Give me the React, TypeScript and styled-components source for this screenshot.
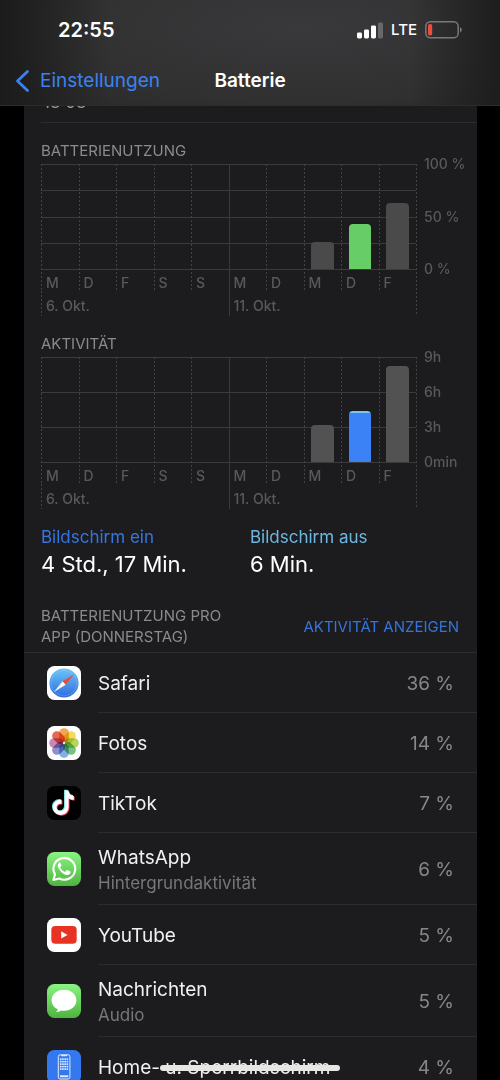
import React from "react";
import styled, { createGlobalStyle, css } from "styled-components";

const GlobalStyle = createGlobalStyle`
  *, *::before, *::after { box-sizing: border-box; }
  html, body { margin: 0; background: #000; }
  body { font-family: Inter, "Liberation Sans", sans-serif; color: #fff; -webkit-font-smoothing: antialiased; }
  h1, h2, ul, dl, dd, dt, p { margin: 0; padding: 0; font-weight: 400; }
`;

const Screen = styled.div`
  position: relative;
  display: flex;
  flex-direction: column;
  height: 100vh;
  overflow: hidden;
  background: #000;
`;

const Header = styled.header`
  flex: none;
  border-bottom: 1px solid #2c2c2d;
  background:
    linear-gradient(90deg, rgba(27, 27, 28, 1) 0%, rgba(27, 27, 28, 0) 22%, rgba(27, 27, 28, 0) 82%, rgba(27, 27, 28, 0.9) 100%),
    radial-gradient(ellipse 90% 120% at 60% 25%, #39393b 0%, #303031 60%, #262627 100%);
`;

const StatusBar = styled.div`
  display: flex;
  align-items: center;
  justify-content: space-between;
  height: 60px;
  padding: 0 38px 0 58px;
`;

const Clock = styled.time`
  font-size: 20px;
  line-height: 24px;
  font-weight: 600;
`;

const StatusIcons = styled.div`
  display: flex;
  align-items: center;
  gap: 8px;
  font-size: 15px;
  line-height: 20px;
  font-weight: 500;
`;

const NavBar = styled.nav`
  display: grid;
  grid-template-columns: 1fr auto 1fr;
  align-items: center;
  height: 45px;
  padding: 0 15px 4px;
`;

const BackLink = styled.a`
  display: flex;
  align-items: center;
  gap: 10px;
  color: #3b82f0;
  font-size: 19px;
  line-height: 24px;
  text-decoration: none;
`;

const PageTitle = styled.h1`
  font-size: 19px;
  line-height: 24px;
  font-weight: 600;
`;

const Content = styled.main`
  flex: 1;
  min-height: 0;
  overflow-y: auto;
  scrollbar-width: none;
  margin: 0 23px 0 24px;
  background: #1c1c1e;
`;

const ClippedRow = styled.p`
  display: flex;
  align-items: flex-end;
  height: 17px;
  margin-left: 17px;
  padding: 0 0 10px 2px;
  overflow: hidden;
  border-bottom: 1px solid #2b2b2d;
  color: #98989e;
  font-size: 17px;
  line-height: 20px;
`;

const ChartSection = styled.section`
  padding: 17px 0 0 17px;
`;

const Caption = styled.h2`
  color: #8a8a8f;
  font-size: 15px;
  line-height: 21px;
`;

const ChartBody = styled.div`
  display: flex;
  padding-top: 3px;
`;

const Plot = styled.div`
  position: relative;
  flex: 1;
`;

const GridLines = styled.div`
  position: absolute;
  inset: 0 0 auto 0;
  height: 106px;
  display: flex;
  flex-direction: column;
  justify-content: space-between;
`;

const GridLine = styled.div`
  height: 1px;
  background: #3b3b3d;
`;

const Columns = styled.div`
  position: relative;
  display: grid;
  grid-template-columns: repeat(10, 1fr);
`;

const dashed = "repeating-linear-gradient(#434345 0 2px, transparent 2px 4px)";

const rule = css<{ $solid?: boolean }>`
  background: ${(p) => (p.$solid ? "linear-gradient(#39393b, #39393b)" : dashed)} left top / 1px 100% no-repeat;
`;

const Day = styled.div<{ $solid?: boolean }>`
  ${rule}
  height: 127px;
`;

const BarArea = styled.div`
  display: flex;
  align-items: flex-end;
  height: 105px;
  padding: 0 20%;
`;

const Bar = styled.div<{ $color: string; $cap?: string }>`
  width: 100%;
  border-radius: 4px 4px 0 0;
  background: ${(p) => (p.$cap ? `linear-gradient(${p.$cap} 0 2px, ${p.$color} 2px)` : p.$color)};
`;

const ChartLabel = styled.span`
  display: block;
  padding: 4px 0 0 5px;
  color: #59595b;
  font-size: 14px;
  line-height: 20px;
  font-weight: 500;
`;

const Weeks = styled.div`
  display: grid;
  grid-template-columns: 1fr 1fr;
`;

const Week = styled.div<{ $solid?: boolean }>`
  ${rule}
  height: 25px;
  padding-top: 1px;
`;

const EndRule = styled.div`
  ${rule}
  width: 1px;
`;

const Axis = styled.div`
  display: flex;
  flex-direction: column;
  justify-content: space-between;
  width: 60px;
  height: 125px;
  margin-top: -10px;
  padding-left: 7px;
  color: #59595b;
  font-size: 14px;
  line-height: 20px;
  font-weight: 500;
`;

const Totals = styled.dl`
  display: grid;
  grid-template-columns: 209px 1fr;
  padding: 16px 17px 0;
`;

const TotalName = styled.dt<{ $color: string }>`
  color: ${(p) => p.$color};
  font-size: 17px;
  line-height: 24px;
`;

const TotalValue = styled.dd`
  font-size: 22px;
  line-height: 30px;
`;

const ListHeader = styled.div`
  display: flex;
  align-items: center;
  justify-content: space-between;
  padding: 26px 18px 5px 17px;
  border-bottom: 1px solid #2c2c2e;
`;

const TextButton = styled.button`
  padding: 0;
  border: 0;
  background: none;
  color: #3673dc;
  font: inherit;
  font-size: 15px;
  line-height: 21px;
`;

const AppList = styled.ul`
  list-style: none;
`;

const AppRow = styled.li<{ $tall?: boolean }>`
  display: flex;
  align-items: center;
  gap: 17px;
  height: ${(p) => (p.$tall ? 72 : 60)}px;
  padding-left: 23px;

  svg { flex: none; }
`;

const AppCell = styled.div`
  display: flex;
  flex: 1;
  align-items: center;
  justify-content: space-between;
  height: 100%;
  padding: 3px 23px 0 0;
  border-bottom: 1px solid #2c2c2e;
`;

const AppName = styled.div`
  font-size: 19px;
  line-height: 26px;
  color: #f0f0f0;
`;

const AppNote = styled.div`
  font-size: 17px;
  line-height: 24px;
  color: #77777b;
`;

const Percent = styled.span`
  color: #87878b;
  font-size: 19px;
  line-height: 26px;
`;

const HomeIndicator = styled.div`
  position: absolute;
  bottom: 9px;
  left: 50%;
  width: 36%;
  height: 6px;
  border-radius: 3px;
  background: #e8e6e4;
  transform: translateX(-50%);
`;

const Signal = () => (
  <svg width="26" height="17" viewBox="0 0 26 17" aria-label="Signal">
    <rect x="0" y="10.5" width="5" height="6" rx="1.4" fill="#fff" />
    <rect x="7" y="7.5" width="5" height="9" rx="1.4" fill="#fff" />
    <rect x="14" y="3.5" width="5" height="13" rx="1.4" fill="#fff" />
    <rect x="21" y="0.5" width="5" height="16" rx="1.4" fill="#68686a" />
  </svg>
);

const Battery = () => (
  <svg width="37" height="18" viewBox="0 0 37 18" aria-label="Batterie">
    <rect x="0.8" y="0.8" width="32.4" height="16" rx="4.6" fill="none" stroke="#79797b" strokeWidth="1.5" />
    <rect x="3" y="3" width="4.2" height="11.6" rx="1.8" fill="#ea4e3d" />
    <path d="M35 6.2c1.300.6 1.800 1.500 1.800 2.600s-.5 2-1.800 2.600z" fill="#79797b" />
  </svg>
);

const Chevron = () => (
  <svg width="15" height="24" viewBox="0 0 15 24" fill="none" aria-hidden="true">
    <path d="M12.500 2.500 2.500 12l10 9.500" stroke="#3b82f0" strokeWidth="2.800" strokeLinecap="round" strokeLinejoin="round" />
  </svg>
);

const Tile = ({ fill, children }: { fill: string; children: React.ReactNode }) => (
  <svg width="34" height="34" viewBox="0 0 34 34" aria-hidden="true">
    <defs>
      <linearGradient id="green" x1="0" y1="0" x2="0" y2="1">
        <stop offset="0" stopColor="#8af583" />
        <stop offset="1" stopColor="#4fb33e" />
      </linearGradient>
      <linearGradient id="sky" x1="0" y1="0" x2="0" y2="1">
        <stop offset="0" stopColor="#6cc6f7" />
        <stop offset="1" stopColor="#2f6be0" />
      </linearGradient>
    </defs>
    <rect width="34" height="34" rx="7.500" fill={fill} />
    {children}
  </svg>
);

const SafariIcon = () => (
  <Tile fill="#fff">
    <circle cx="17" cy="17" r="14.600" fill="url(#sky)" />
    <circle cx="17" cy="17" r="12.700" fill="none" stroke="#a8dcff" strokeOpacity=".55" strokeWidth="1.200" strokeDasharray=".5 1" />
    <path d="M27 8.500 15.500 15.200l3.200 3.600z" fill="#ea4b3c" />
    <path d="M7 26 15.500 15.200l3.200 3.600z" fill="#f7f7f7" />
  </Tile>
);

const petals = ["#f09a38", "#efd93c", "#a9cf4d", "#66b970", "#6fa6dc", "#7e7fc6", "#c478ab", "#e2533f"];

const PhotosIcon = () => (
  <Tile fill="#fdfdfd">
    <g style={{ isolation: "isolate" }}>
      {petals.map((color, i) => (
        <rect
          key={color}
          x="12.200"
          y="2.200"
          width="9.600"
          height="14.200"
          rx="4.800"
          fill={color}
          opacity=".88"
          style={{ mixBlendMode: "multiply" }}
          transform={`rotate(${i * 45} 17 17)`}
        />
      ))}
    </g>
    <circle cx="17" cy="17" r="1" fill="#fff" />
  </Tile>
);

const notePath =
  "M17.800 4.600h3.700c.3 3 2.200 5 5.300 5.300v3.900c-2 0-3.800-.6-5.200-1.600v8.600c0 4.900-3.500 8.200-8 8.200-4.400 0-7.800-3.400-7.800-7.700 0-4.600 3.900-8 8.700-7.500v4c-2.700-.6-4.900 1.100-4.900 3.500 0 2.100 1.700 3.800 3.900 3.800 2.500 0 4.300-1.700 4.300-4.500z";

const TikTokIcon = () => (
  <Tile fill="#010101">
    <path d={notePath} fill="#5fdedb" transform="translate(-.8 -.8)" />
    <path d={notePath} fill="#e8405a" transform="translate(.9 .8)" />
    <path d={notePath} fill="#fff" />
  </Tile>
);

const WhatsAppIcon = () => (
  <Tile fill="url(#green)">
    <path
      d="M6.400 28l1.600-5.600A10.900 10.900 0 1 1 12.200 26.400z"
      fill="none"
      stroke="#fff"
      strokeWidth="2.100"
      strokeLinejoin="round"
    />
    <path
      d="M13.500 11.100c-.4-.8-1.100-.7-1.600-.2-2 2.100-1 4.800 1.400 7.800 2.700 3.300 5.300 4.600 7.800 4.200 1.500-.3 2.600-1.600 2.500-3 0-.4-.2-.5-.6-.7l-2.500-1.200c-.4-.2-.7-.1-.9.2l-1.100 1.400c-.2.300-.5.300-.9.100-1.900-.8-3.200-2.100-4.200-3.800-.2-.3-.1-.6.1-.8l.8-1c.2-.3.200-.5.100-.8z"
      fill="#fff"
    />
  </Tile>
);

const YouTubeIcon = () => (
  <Tile fill="#fff">
    <rect x="4.300" y="8" width="25.400" height="17.800" rx="4" fill="#e83223" />
    <path d="M14.200 13.300v7.200l6.300-3.600z" fill="#fff" />
  </Tile>
);

const MessagesIcon = () => (
  <Tile fill="url(#green)">
    <path
      d="M17 5.800c7 0 12.400 4.600 12.400 10.500S24 26.800 17 26.800c-1 0-2-.1-3-.3-1.200.9-2.900 1.500-4.900 1.400 1-.7 1.600-1.600 1.700-2.600-3.800-1.800-6.200-5.100-6.200-9C4.600 10.400 10 5.800 17 5.800z"
      fill="#fff"
    />
  </Tile>
);

const HomeScreenIcon = () => (
  <Tile fill="#3478f0">
    <rect x="11.300" y="4.800" width="11.600" height="24.200" rx="1.800" fill="none" stroke="#dce9ff" strokeWidth="1" />
    <path d="M14.500 5.600h5" stroke="#dce9ff" strokeWidth="1.400" strokeLinecap="round" />
    {[8.2, 10.7, 13.2, 15.7, 18.2].map((y) =>
      [12.9, 15.1, 17.3, 19.5].map((x) => (
        <rect key={`${x}-${y}`} x={x} y={y} width="1.700" height="1.700" rx=".4" fill="#dce9ff" />
      ))
    )}
    <rect x="12.900" y="25.300" width="8.400" height="2" rx=".5" fill="#dce9ff" />
  </Tile>
);

type BarData = { value: number; color: string; cap?: string };

const dayNames = ["M", "D", "F", "S", "S", "M", "D", "M", "D", "F"];

const Chart = ({
  title,
  lines,
  axis,
  bars,
}: {
  title: string;
  lines: number;
  axis: string[];
  bars: Record<number, BarData>;
}) => (
  <ChartSection>
    <Caption>{title}</Caption>
    <ChartBody>
      <Plot>
        <GridLines>
          {Array.from({ length: lines }, (_, i) => (
            <GridLine key={i} />
          ))}
        </GridLines>
        <Columns>
          {dayNames.map((name, i) => (
            <Day key={i} $solid={i === 5}>
              <BarArea>
                {bars[i] && (
                  <Bar $color={bars[i].color} $cap={bars[i].cap} style={{ height: `${bars[i].value}%` }} />
                )}
              </BarArea>
              <ChartLabel>{name}</ChartLabel>
            </Day>
          ))}
        </Columns>
        <Weeks>
          <Week>
            <ChartLabel>6. Okt.</ChartLabel>
          </Week>
          <Week $solid>
            <ChartLabel>11. Okt.</ChartLabel>
          </Week>
        </Weeks>
      </Plot>
      <EndRule />
      <Axis>
        {axis.map((label) => (
          <span key={label}>{label}</span>
        ))}
      </Axis>
    </ChartBody>
  </ChartSection>
);

const apps = [
  { name: "Safari", share: "36 %", Icon: SafariIcon },
  { name: "Fotos", share: "14 %", Icon: PhotosIcon },
  { name: "TikTok", share: "7 %", Icon: TikTokIcon },
  { name: "WhatsApp", note: "Hintergrundaktivität", share: "6 %", Icon: WhatsAppIcon },
  { name: "YouTube", share: "5 %", Icon: YouTubeIcon },
  { name: "Nachrichten", note: "Audio", share: "5 %", Icon: MessagesIcon },
  { name: "Home- u. Sperrbildschirm", share: "4 %", Icon: HomeScreenIcon },
];

export default function App() {
  return (
    <Screen>
      <GlobalStyle />
      <Header>
        <StatusBar>
          <Clock>22:55</Clock>
          <StatusIcons>
            <Signal />
            <span>LTE</span>
            <Battery />
          </StatusIcons>
        </StatusBar>
        <NavBar>
          <BackLink href="#einstellungen">
            <Chevron />
            Einstellungen
          </BackLink>
          <PageTitle>Batterie</PageTitle>
        </NavBar>
      </Header>
      <Content>
        <ClippedRow>18 08</ClippedRow>
        <Chart
          title="BATTERIENUTZUNG"
          lines={5}
          axis={["100 %", "50 %", "0 %"]}
          bars={{
            7: { value: 26, color: "#4a4a4a" },
            8: { value: 43, color: "#67ce67" },
            9: { value: 63, color: "#4a4a4a" },
          }}
        />
        <Chart
          title="AKTIVITÄT"
          lines={4}
          axis={["9h", "6h", "3h", "0min"]}
          bars={{
            7: { value: 35, color: "#525252" },
            8: { value: 49, color: "#3b82f7", cap: "#78c4f5" },
            9: { value: 91, color: "#525252" },
          }}
        />
        <Totals>
          <div>
            <TotalName $color="#3575e2">Bildschirm ein</TotalName>
            <TotalValue>4 Std., 17 Min.</TotalValue>
          </div>
          <div>
            <TotalName $color="#6db8e0">Bildschirm aus</TotalName>
            <TotalValue>6 Min.</TotalValue>
          </div>
        </Totals>
        <ListHeader>
          <Caption>
            BATTERIENUTZUNG PRO
            <br />
            APP (DONNERSTAG)
          </Caption>
          <TextButton type="button">AKTIVITÄT ANZEIGEN</TextButton>
        </ListHeader>
        <AppList>
          {apps.map(({ name, note, share, Icon }) => (
            <AppRow key={name} $tall={Boolean(note)}>
              <Icon />
              <AppCell>
                <div>
                  <AppName>{name}</AppName>
                  {note && <AppNote>{note}</AppNote>}
                </div>
                <Percent>{share}</Percent>
              </AppCell>
            </AppRow>
          ))}
        </AppList>
      </Content>
      <HomeIndicator />
    </Screen>
  );
}
